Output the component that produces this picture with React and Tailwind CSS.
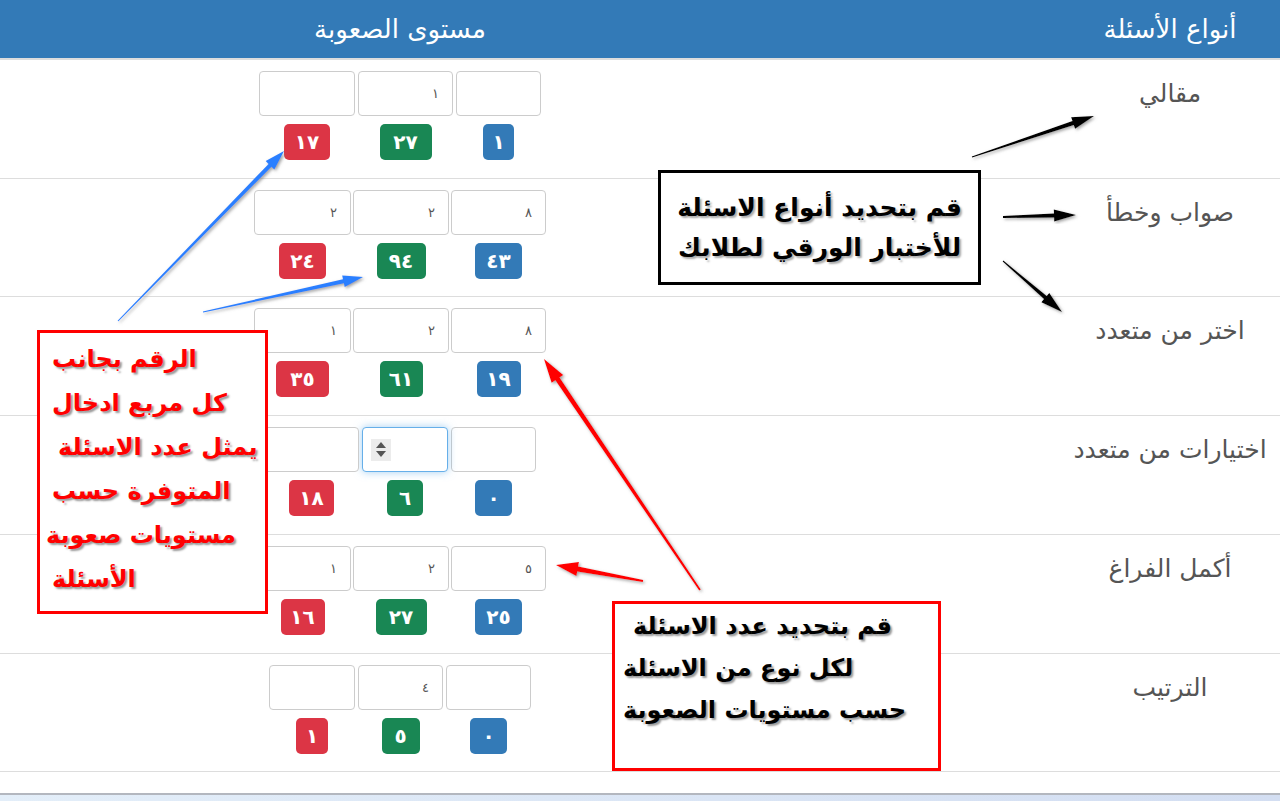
import React from "react";

const BLUE = "bg-[#337ab7]";
const GREEN = "bg-[#198754]";
const RED = "bg-[#dc3545]";

const rows = [
  {
    label: "مقالي",
    h: "h-[119px]",
    gap: "gap-[3px]",
    cells: [
      { w: "w-[85px]", v: "", b: "١", bw: "w-[31px]", c: BLUE },
      { w: "w-[95px]", v: "١", b: "٢٧", bw: "w-[52px]", c: GREEN },
      { w: "w-[96px]", v: "", b: "١٧", bw: "w-[46px]", c: RED },
    ],
  },
  {
    label: "صواب وخطأ",
    h: "h-[118px]",
    gap: "gap-[2px]",
    cells: [
      { w: "w-[95px]", v: "٨", b: "٤٣", bw: "w-[47px]", c: BLUE },
      { w: "w-[96px]", v: "٢", b: "٩٤", bw: "w-[49px]", c: GREEN },
      { w: "w-[97px]", v: "٢", b: "٢٤", bw: "w-[47px]", c: RED },
    ],
  },
  {
    label: "اختر من متعدد",
    h: "h-[119px]",
    gap: "gap-[2px]",
    cells: [
      { w: "w-[95px]", v: "٨", b: "١٩", bw: "w-[44px]", c: BLUE },
      { w: "w-[96px]", v: "٢", b: "٦١", bw: "w-[43px]", c: GREEN },
      { w: "w-[97px]", v: "١", b: "٣٥", bw: "w-[53px]", c: RED },
    ],
  },
  {
    label: "اختيارات من متعدد",
    h: "h-[119px]",
    gap: "gap-[3px]",
    cells: [
      { w: "w-[85px]", v: "", b: "٠", bw: "w-[37px]", c: BLUE },
      { w: "w-[86px]", v: "", b: "٦", bw: "w-[36px]", c: GREEN, focus: true },
      { w: "w-[95px]", v: "", b: "١٨", bw: "w-[45px]", c: RED },
    ],
  },
  {
    label: "أكمل الفراغ",
    h: "h-[119px]",
    gap: "gap-[2px]",
    cells: [
      { w: "w-[95px]", v: "٥", b: "٢٥", bw: "w-[47px]", c: BLUE },
      { w: "w-[96px]", v: "٢", b: "٢٧", bw: "w-[51px]", c: GREEN },
      { w: "w-[97px]", v: "١", b: "١٦", bw: "w-[44px]", c: RED },
    ],
  },
  {
    label: "الترتيب",
    h: "h-[118px]",
    gap: "gap-[3px]",
    cells: [
      { w: "w-[85px]", v: "", b: "٠", bw: "w-[37px]", c: BLUE },
      { w: "w-[85px]", v: "٤", b: "٥", bw: "w-[38px]", c: GREEN },
      { w: "w-[86px]", v: "", b: "١", bw: "w-[32px]", c: RED },
    ],
  },
];

function Cell({ cell }) {
  return (
    <div className="flex flex-col items-center">
      {cell.focus ? (
        <div
          className={`${cell.w} h-[45px] rounded-[4px] border border-[#66afe9] shadow-[0_0_8px_rgba(102,175,233,0.6)] bg-white flex items-center justify-end pl-[8px]`}
        >
          <div className="w-[20px] h-[22px] bg-[#ececec] flex flex-col items-center justify-center gap-[3px]">
            <svg width="10" height="6" viewBox="0 0 10 6">
              <path d="M5 0 L10 6 L0 6 Z" fill="#555" />
            </svg>
            <svg width="10" height="6" viewBox="0 0 10 6">
              <path d="M0 0 L10 0 L5 6 Z" fill="#555" />
            </svg>
          </div>
        </div>
      ) : (
        <div
          className={`${cell.w} h-[45px] rounded-[4px] border border-[#ccc] bg-white flex items-center pr-[13px] text-[13px] text-[#555]`}
        >
          {cell.v}
        </div>
      )}
      <div
        className={`${cell.bw} ${cell.c} mt-[8px] h-[36px] rounded-[5px] flex items-center justify-center text-white font-bold text-[20px] leading-none`}
      >
        {cell.b}
      </div>
    </div>
  );
}

function arrowPoints(x1, y1, x2, y2, tailW, shaftW, headL, headW) {
  const dx = x2 - x1;
  const dy = y2 - y1;
  const L = Math.hypot(dx, dy);
  const ux = dx / L;
  const uy = dy / L;
  const nx = -uy;
  const ny = ux;
  const bx = x2 - ux * headL;
  const by = y2 - uy * headL;
  const p = [
    [x1 + (nx * tailW) / 2, y1 + (ny * tailW) / 2],
    [bx + (nx * shaftW) / 2, by + (ny * shaftW) / 2],
    [bx + (nx * headW) / 2, by + (ny * headW) / 2],
    [x2, y2],
    [bx - (nx * headW) / 2, by - (ny * headW) / 2],
    [bx - (nx * shaftW) / 2, by - (ny * shaftW) / 2],
    [x1 - (nx * tailW) / 2, y1 - (ny * tailW) / 2],
  ];
  return p.map((q) => q.map((n) => n.toFixed(1)).join(",")).join(" ");
}

const arrows = [
  { a: [972, 157, 1094, 116], fill: "#000", t: 1, s: 4, hl: 22, hw: 12 },
  { a: [1003, 217, 1076, 215], fill: "#000", t: 2, s: 4, hl: 22, hw: 12 },
  { a: [1003, 261, 1062, 312], fill: "#000", t: 1, s: 4, hl: 22, hw: 12 },
  { a: [118, 321, 284, 151], fill: "#2b7fff", t: 1, s: 4, hl: 20, hw: 12 },
  { a: [203, 312, 363, 277], fill: "#2b7fff", t: 1, s: 4, hl: 20, hw: 12 },
  { a: [700, 590, 544, 359], fill: "#ff0000", t: 2, s: 5, hl: 24, hw: 14 },
  { a: [643, 581, 556, 565], fill: "#ff0000", t: 2, s: 5, hl: 22, hw: 14 },
];

const ann = "font-['DejaVu_Sans',sans-serif] font-bold";

export default function App() {
  return (
    <div
      dir="rtl"
      className="relative w-[1280px] h-[801px] overflow-hidden bg-white font-['DejaVu_Sans','Noto_Sans',sans-serif]"
    >
      {/* header */}
      <div className="grid grid-cols-[220px_260px_800px] h-[60px] bg-[#337ab7] border-b-2 border-[#ddd] items-center text-white text-[26px]">
        <div className="text-center">أنواع الأسئلة</div>
        <div />
        <div className="text-center">مستوى الصعوبة</div>
      </div>

      {/* rows */}
      {rows.map((r, i) => (
        <div
          key={i}
          className={`grid grid-cols-[220px_260px_800px] ${r.h} border-b border-[#ddd]`}
        >
          <div className="pt-[18px] text-center text-[25px] leading-[32px] text-[#555]">
            {r.label}
          </div>
          <div />
          <div className={`pt-[11px] flex justify-center ${r.gap}`}>
            {r.cells.map((c, j) => (
              <Cell key={j} cell={c} />
            ))}
          </div>
        </div>
      ))}

      <div className="h-[21px]" />
      <div className="h-[2px] bg-[#b3b7bf]" />
      <div className="h-[8px] bg-gradient-to-l from-[#d3def2] to-[#e3eef9]" />

      {/* annotation boxes */}
      <div
        className={`absolute left-[658px] top-[170px] w-[323px] h-[115px] border-[3px] border-black bg-white flex flex-col items-center justify-center text-black text-[25px] leading-[40px] [text-shadow:2px_2px_2px_#aaa] ${ann}`}
      >
        <div>قم بتحديد أنواع الاسئلة</div>
        <div>للأختبار الورقي لطلابك</div>
      </div>

      <div
        className={`absolute left-[37px] top-[330px] w-[231px] h-[284px] border-[3px] border-[#ff0000] bg-white pt-[4px] pl-[12px] text-left text-[#ff0000] text-[24px] leading-[44px] [text-shadow:2px_2px_2px_#999] ${ann}`}
      >
        <div>الرقم بجانب</div>
        <div>كل مربع ادخال</div>
        <div className="pl-[6px]">يمثل عدد الاسئلة</div>
        <div>المتوفرة حسب</div>
        <div className="-ml-[6px]">مستويات صعوبة</div>
        <div>الأسئلة</div>
      </div>

      <div
        className={`absolute left-[612px] top-[601px] w-[329px] h-[170px] border-[3px] border-[#ff0000] bg-white pt-[1px] pl-[8px] text-left text-black text-[24px] leading-[42px] [text-shadow:2px_2px_2px_#999] ${ann}`}
      >
        <div className="pl-[10px]">قم بتحديد عدد الاسئلة</div>
        <div>لكل نوع من الاسئلة</div>
        <div>حسب مستويات الصعوبة</div>
      </div>

      {/* arrows */}
      <svg
        className="absolute left-0 top-0 pointer-events-none"
        width="1280"
        height="801"
        viewBox="0 0 1280 801"
      >
        <defs>
          <filter id="sh" x="-20%" y="-20%" width="140%" height="140%">
            <feDropShadow dx="1.5" dy="1.5" stdDeviation="1.5" floodColor="#777" floodOpacity="0.7" />
          </filter>
        </defs>
        {arrows.map((ar, i) => (
          <polygon
            key={i}
            points={arrowPoints(...ar.a, ar.t, ar.s, ar.hl, ar.hw)}
            fill={ar.fill}
            filter="url(#sh)"
          />
        ))}
      </svg>
    </div>
  );
}
